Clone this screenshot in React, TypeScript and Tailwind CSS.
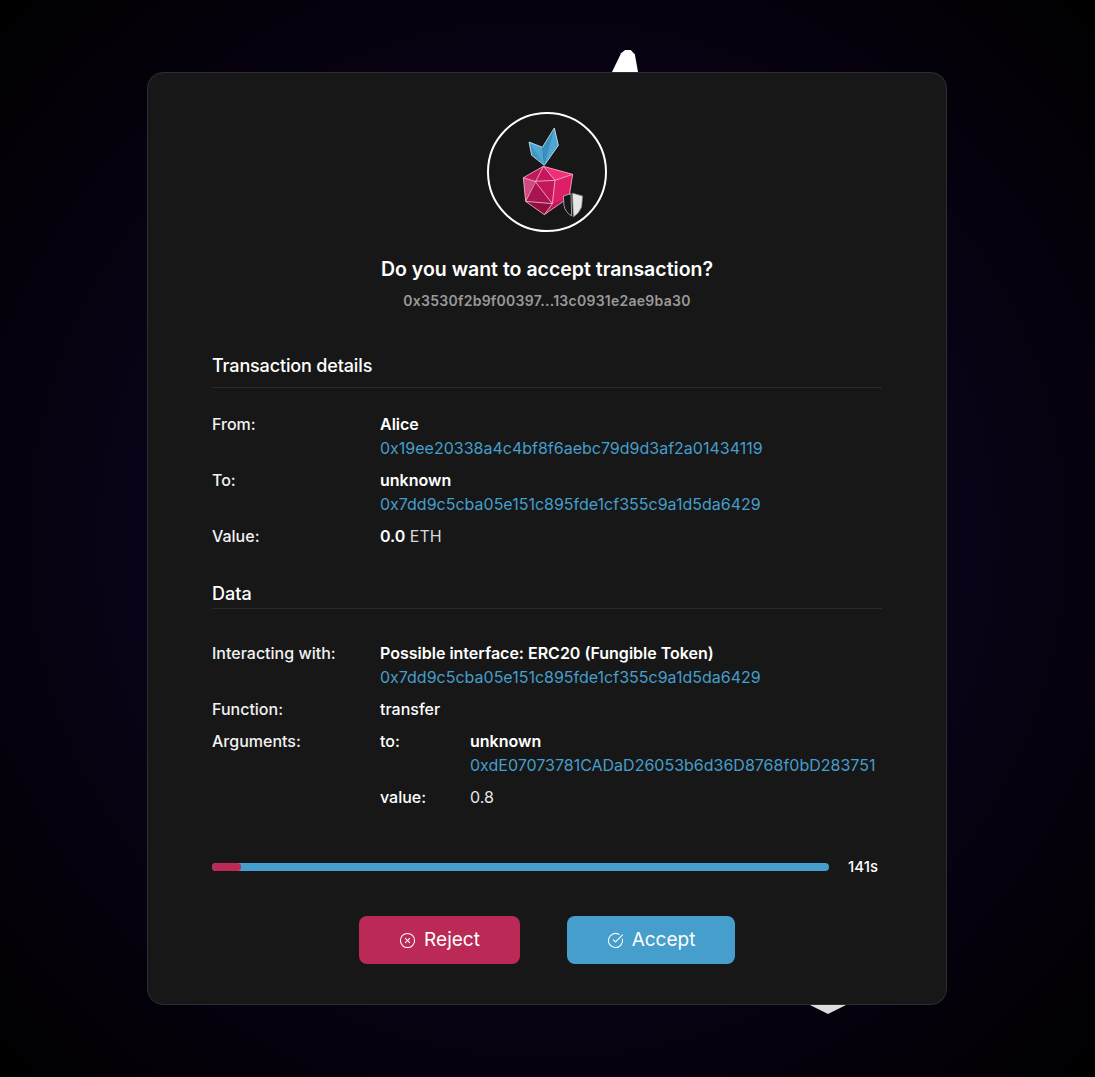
import React from 'react';
import { CircleCheckBig, CircleX } from 'lucide-react';

const Logo = () => (
  <svg viewBox="-78 -24 348 348" className="w-full h-full">
    {/* leaf */}
    <polygon points="42,60 82,76 88,130 50,100" fill="#3f97c4" />
    <polygon points="42,60 82,76 88,130" fill="#4ea6d2" />
    <polygon points="118,18 130,70 88,130 82,76" fill="#3a8fbc" />
    <polygon points="118,18 130,70 88,130" fill="#4ea6d2" />
    <polyline points="42,60 82,76 118,18 130,70 88,130 50,100 42,60" fill="none" stroke="#cfe6f2" strokeWidth="2.5" />
    {/* ruby */}
    <polygon points="85,133 173,157 162,226 88,278 32,238 25,167" fill="#c2185b" />
    <polygon points="85,133 173,157 120,175" fill="#ef2f78" />
    <polygon points="25,167 60,178 32,238" fill="#cf4a80" />
    <polygon points="120,175 173,157 162,226 112,245" fill="#dd1f68" />
    <polygon points="32,238 112,245 88,278" fill="#8f1040" />
    <polygon points="60,178 112,245 32,238" fill="#a9134f" />
    <g fill="none" stroke="#f4b6cf" strokeWidth="2.5" strokeLinejoin="round">
      <polygon points="85,133 173,157 162,226 88,278 32,238 25,167" />
      <polyline points="85,133 120,175 173,157" />
      <polyline points="120,175 112,245 88,278" />
      <polyline points="85,133 32,238 112,245" />
      <polyline points="25,167 60,178 120,175" />
      <line x1="60" y1="178" x2="112" y2="245" />
    </g>
    {/* shield */}
    <path d="M145 222 L168 215 L170 282 Q150 270 147 250 Z" fill="#171717" stroke="#b9b9b9" strokeWidth="2.5" />
    <path d="M172 213 L203 222 L200 255 Q192 275 175 285 Z" fill="#e6e6e6" stroke="#777777" strokeWidth="2" />
  </svg>
);

const Address = ({ children }: { children: React.ReactNode }) => (
  <div className="text-[#459ecc] font-normal">{children}</div>
);

const Row = ({ label, children }: { label: string; children: React.ReactNode }) => (
  <div className="flex leading-6">
    <div className="w-[168px] shrink-0 font-medium text-[#f2f2f2]">{label}</div>
    <div className="min-w-0">{children}</div>
  </div>
);

export default function App() {
  return (
    <div
      className="relative min-h-screen h-[1077px] overflow-hidden bg-black pt-[72px] text-white"
      style={{ fontFamily: 'Inter, "Liberation Sans", sans-serif' }}
    >
      <div className="absolute inset-0 bg-[radial-gradient(circle_at_center,#12031f_0%,#0a0216_55%,#000000_100%)]" />

      {/* bits of the background shape poking out from behind the card */}
      <div className="absolute left-[612px] top-[50px] w-[26px] h-[22px] bg-white [clip-path:polygon(0_100%,35%_15%,50%_0,72%_0,88%_20%,100%_100%)]" />
      <div className="absolute left-[810px] top-[1005px] w-[36px] h-[9px] bg-[#dddddd] [clip-path:polygon(0_0,100%_0,50%_100%)]" />

      <div className="relative ml-[147px] w-[800px] h-[933px] rounded-2xl border border-[#2e2e32] bg-[#171717] px-[64px] pt-[39px]">
        <div className="mx-auto w-[120px] h-[120px] rounded-full border-2 border-white">
          <Logo />
        </div>

        <h1 className="mt-[24px] text-center text-[19.5px] leading-[26px] font-semibold">
          Do you want to accept transaction?
        </h1>
        <p className="mt-[7px] text-center text-sm leading-6 font-semibold tracking-[0.26px] text-[#999999]">
          0x3530f2b9f00397...13c0931e2ae9ba30
        </p>

        <h2 className="mt-[40px] text-lg leading-[26px] font-medium tracking-[-0.15px]">Transaction details</h2>
        <div className="mt-[8px] h-px bg-[#2a2a2a]" />

        <div className="mt-[24px] flex flex-col gap-2 text-base">
          <Row label="From:">
            <div className="font-semibold">Alice</div>
            <Address>0x19ee20338a4c4bf8f6aebc79d9d3af2a01434119</Address>
          </Row>
          <Row label="To:">
            <div className="font-semibold">unknown</div>
            <Address>0x7dd9c5cba05e151c895fde1cf355c9a1d5da6429</Address>
          </Row>
          <Row label="Value:">
            <span className="font-semibold">0.0</span> <span className="text-[#d9d9d9]">ETH</span>
          </Row>
        </div>

        <h2 className="mt-[33px] text-lg leading-[26px] font-medium">Data</h2>
        <div className="mt-px h-px bg-[#2a2a2a]" />

        <div className="mt-[32px] flex flex-col gap-2 text-base">
          <Row label="Interacting with:">
            <div className="font-semibold">Possible interface: ERC20 (Fungible Token)</div>
            <Address>0x7dd9c5cba05e151c895fde1cf355c9a1d5da6429</Address>
          </Row>
          <Row label="Function:">
            <span className="font-medium">transfer</span>
          </Row>
          <Row label="Arguments:">
            <div className="flex flex-col gap-2">
              <div className="flex">
                <div className="w-[90px] shrink-0 font-medium">to:</div>
                <div>
                  <div className="font-semibold">unknown</div>
                  <Address>0xdE07073781CADaD26053b6d36D8768f0bD283751</Address>
                </div>
              </div>
              <div className="flex">
                <div className="w-[90px] shrink-0 font-medium">value:</div>
                <div className="text-[#e6e6e6]">0.8</div>
              </div>
            </div>
          </Row>
        </div>

        <div className="mt-[48px] flex items-center">
          <div className="w-[617px] h-2 rounded-full bg-[#459ecc]">
            <div className="w-[29px] h-full rounded-full bg-[#bb2a56]" />
          </div>
          <span className="ml-[19px] text-[15px] leading-5 font-medium">141s</span>
        </div>

        <div className="mt-[39px] flex justify-center gap-[47px]">
          <button className="flex items-center justify-center gap-2 w-[161px] h-[48px] rounded-lg bg-[#bb2a56] text-[19px] font-normal">
            <CircleX size={17} strokeWidth={1.5} />
            Reject
          </button>
          <button className="flex items-center justify-center gap-2 w-[168px] h-[48px] rounded-lg bg-[#459ecc] text-[19px] font-normal">
            <CircleCheckBig size={17} strokeWidth={1.5} />
            Accept
          </button>
        </div>
      </div>
    </div>
  );
}
